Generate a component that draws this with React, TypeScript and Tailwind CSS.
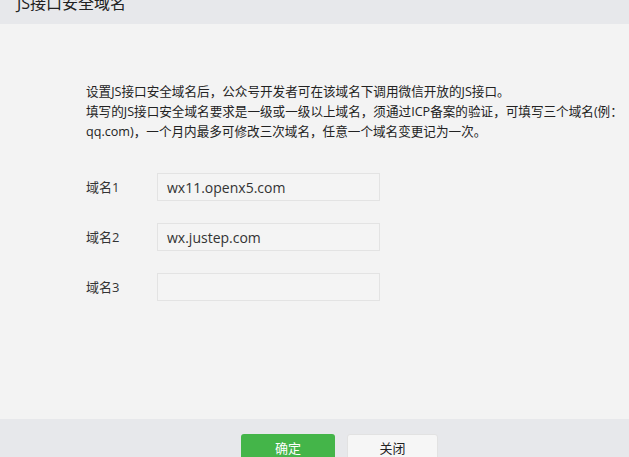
import React from "react";

const cjk = { fontFamily: '"Open Sans", "Noto Sans CJK SC", sans-serif' };

function Row({ label, value }: { label: string; value: string }) {
  return (
    <div className="flex items-center h-[28px]">
      <div className="w-[71px] text-[13px] text-[#333] pt-[1px]">{label}</div>
      <div className="w-[223px] h-[28px] border border-[#e3e3e3] bg-[#f4f4f4] flex items-center pl-[9px] text-[14px] text-[#333]">
        {value}
      </div>
    </div>
  );
}

export default function App() {
  return (
    <div className="w-[629px] h-[457px] bg-[#f3f3f3] flex flex-col overflow-hidden" style={cjk}>
      <div className="h-[24px] bg-[#e7e8eb] relative overflow-hidden shrink-0">
        <div className="absolute left-[17px] top-[-9px] text-[16px] text-[#222] leading-[24px]">JS接口安全域名</div>
      </div>
      <div className="flex-1 pl-[86px] pt-[58px]">
        <div className="text-[12.6px] leading-[20px] text-[#222] whitespace-nowrap">
          <div>设置JS接口安全域名后，公众号开发者可在该域名下调用微信开放的JS接口。</div>
          <div>填写的JS接口安全域名要求是一级或一级以上域名，须通过ICP备案的验证，可填写三个域名(例：</div>
          <div>qq.com)，一个月内最多可修改三次域名，任意一个域名变更记为一次。</div>
        </div>
        <div className="mt-[31px] flex flex-col gap-[22px]">
          <Row label="域名1" value="wx11.openx5.com" />
          <Row label="域名2" value="wx.justep.com" />
          <Row label="域名3" value="" />
        </div>
      </div>
      <div className="h-[38px] bg-[#e7e8eb] shrink-0 flex justify-center gap-[12px] pt-[15px] pl-[50px]">
        <div className="w-[94px] h-[30px] bg-[#44b549] rounded-[3px] text-white text-[13px] flex items-center justify-center">确定</div>
        <div className="w-[91px] h-[30px] bg-[#f6f6f6] border border-[#e2e2e2] rounded-[3px] text-[#222] text-[13px] flex items-center justify-center">关闭</div>
      </div>
    </div>
  );
}
